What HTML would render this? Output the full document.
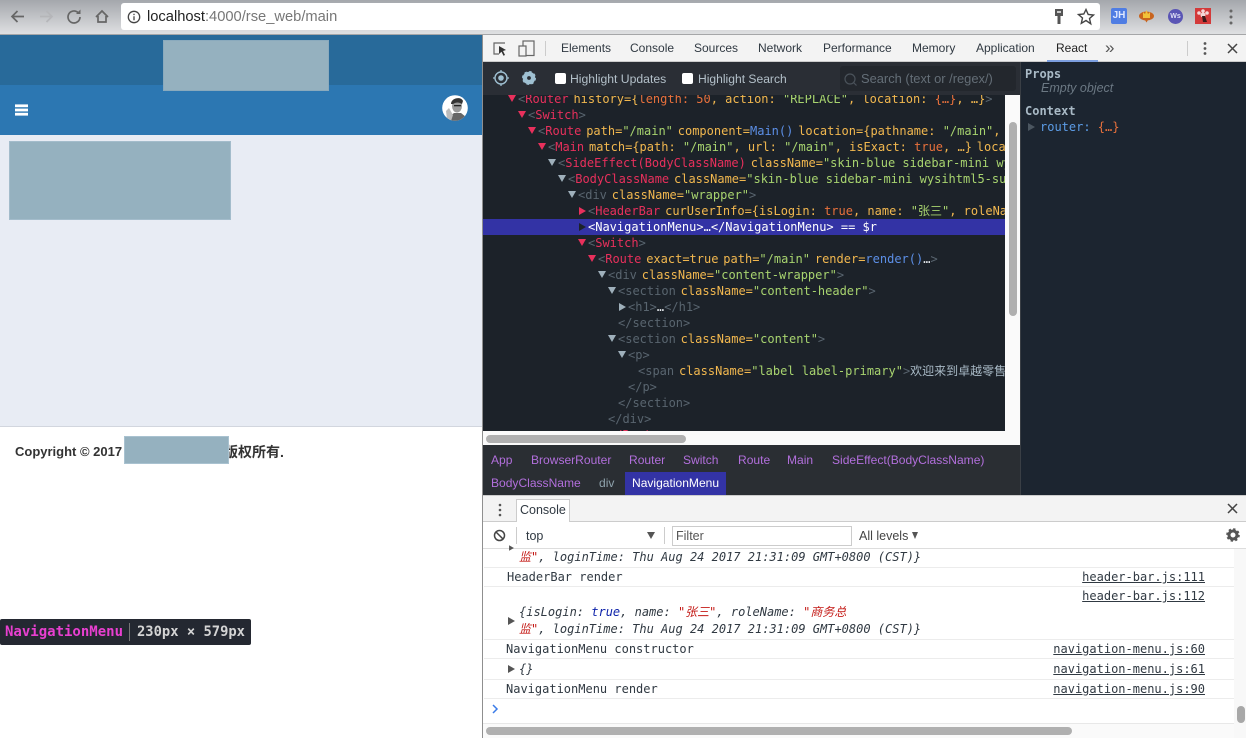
<!DOCTYPE html>
<html><head><meta charset="utf-8"><style>
html,body{margin:0;padding:0;width:1246px;height:738px;overflow:hidden;background:#fff}
*{box-sizing:border-box}
.a{position:absolute}
body{font-family:"Liberation Sans","Noto Sans CJK SC",sans-serif;position:relative}
.t{position:absolute;white-space:pre;font-size:12px;color:#303942;line-height:16px}
.m{font-family:"DejaVu Sans Mono","Noto Sans CJK SC",monospace;font-size:12px;line-height:16px;white-space:pre;position:absolute}
#tree .m{left:0;color:#5f6b75}
.g{color:#59656f}.r{color:#e8305c}.y{color:#f2b84f}.s{color:#a8d46f}.o{color:#e9713c}.b{color:#5c8fe6}.w{color:#e4e8ec}.c{color:#a9bac6}
.k{margin-left:-2.4px}
.ar{position:absolute;width:0;height:0;border-left:4px solid transparent;border-right:4px solid transparent;border-top:7px solid #e8305c}
.ag{border-top-color:#9fb0bb}
.ad{position:absolute;width:0;height:0;border-top:4px solid transparent;border-bottom:4px solid transparent;border-left:7px solid #e8305c}
.bc{position:absolute;font-size:12.05px;color:#b26fdc;line-height:16px;white-space:pre}
.sep{position:absolute;left:484px;width:750px;height:1px;background:#ececec}
.l{color:#303942;text-decoration:underline;text-align:right;right:41px}
.i{font-style:italic;color:#303942}
.red{color:#c41a16}.blu{color:#0d22aa}
</style></head><body>
<!-- chrome toolbar -->
<div class="a" style="left:0;top:0;width:1246px;height:35px;background:linear-gradient(#a4a7ac,#dfe0e2);border-bottom:1px solid #a5a6a8"></div>
<div class="a" style="left:121px;top:3px;width:979px;height:27px;background:#fff;border-radius:3px"></div>
<svg class="a" style="left:0;top:0" width="122" height="34" fill="none" stroke-width="1.7">
<path d="M24 16.5H12M17.5 11l-5.5 5.500 5.500 5.500" stroke="#666"/>
<path d="M40 16.500H52M46.500 11l5.500 5.500-5.500 5.500" stroke="#b5b6b9"/>
<path d="M80 17a6 6 0 1 1-2-4.500" stroke="#666"/><path d="M80.500 9.500v4.500h-4.500z" fill="#666"/>
<path d="M96 17l6-6 6 6M98 16v6h8v-6" stroke="#666"/>
</svg>
<svg class="a" style="left:127px;top:10px" width="14" height="14" fill="none"><circle cx="7" cy="7" r="5.700" stroke="#444" stroke-width="1.300"/><path d="M7 6.200v4M7 3.800v1.300" stroke="#444" stroke-width="1.300"/></svg>
<div class="t" style="left:147px;top:8px;font-size:14.7px;line-height:18px;color:#777"><span style="color:#222">localhost</span>:4000/rse_web/main</div>
<svg class="a" style="left:1050px;top:6px" width="20" height="20"><path d="M5 3h8v7h-2.500v8h-3v-8H5z" fill="#555"/><rect x="7" y="5" width="4" height="2" fill="#ccc"/></svg>
<svg class="a" style="left:1076px;top:7px" width="20" height="20" fill="none"><path d="M10 2.500l2.200 5 5.300.5-4 3.500 1.200 5.300L10 13.500l-4.700 2.800 1.200-5.300-4-3.500 5.300-.5z" stroke="#444" stroke-width="1.400"/></svg>
<div class="a" style="left:1111px;top:8px;width:16px;height:16px;background:#4f7de3;border-radius:2px;color:#dfe8ff;font:bold 10px/16px 'Liberation Sans';text-align:center">JH</div>
<svg class="a" style="left:1138px;top:6px" width="18" height="18"><ellipse cx="8.500" cy="10" rx="7.500" ry="4.500" fill="#c8641e"/><path d="M5 6l2 2 1.500-4 1.500 4 2-2v6H5z" fill="#f2c23a"/><path d="M7 14h3l-1.500 2.500z" fill="#c8641e"/></svg>
<div class="a" style="left:1168px;top:9px;width:15px;height:15px;border-radius:50%;background:#5a55b5;color:#e0e0f5;font:bold 7px/15px 'Liberation Sans';text-align:center">Ws</div>
<svg class="a" style="left:1195px;top:8px" width="16" height="16"><rect width="16" height="16" fill="#d33a3a"/><g fill="#f5d6d6"><circle cx="4" cy="5" r="1.800"/><circle cx="8" cy="3" r="1.800"/><circle cx="12" cy="5" r="1.800"/><circle cx="8" cy="7" r="2.500"/></g><path d="M7 8h3l2 6H8z" fill="#3a1a1a"/></svg>
<svg class="a" style="left:1228px;top:8px" width="6" height="18" fill="#666"><circle cx="3" cy="3" r="1.500"/><circle cx="3" cy="9" r="1.500"/><circle cx="3" cy="15" r="1.500"/></svg>

<!-- left page -->
<div class="a" style="left:0;top:35px;width:483px;height:50px;background:#286a9a"></div>
<div class="a" style="left:0;top:85px;width:483px;height:50px;background:#2c77b2"></div>
<div class="a" style="left:163px;top:40px;width:166px;height:51px;background:#95b1bf;border:1px solid #8aaabd"></div>
<svg class="a" style="left:15px;top:104px" width="13" height="12" fill="#fff"><rect width="13" height="2.800" y="0.400"/><rect width="13" height="2.800" y="4.600"/><rect width="13" height="2.800" y="8.800"/></svg>
<svg class="a" style="left:442px;top:95px" width="26" height="26"><circle cx="13" cy="13" r="12.800" fill="#fff"/><clipPath id="cp"><circle cx="13" cy="13" r="12.800"/></clipPath><g clip-path="url(#cp)"><path d="M8 26v-5l4-3h7l5 4v4z" fill="#666"/><ellipse cx="15" cy="11" rx="5" ry="6.500" fill="#999"/><path d="M9 9c0-6 10-8 12-3l-1 3c-3-2-6-2-9 0z" fill="#333"/><path d="M4 16l3-3 4 7-2 6-4-2z" fill="#bbb"/><rect x="12" y="10" width="7" height="1.300" fill="#222"/></g></svg>
<div class="a" style="left:0;top:135px;width:483px;height:292px;background:#e8ecf4;border-bottom:1px solid #d2d6de"></div>
<div class="a" style="left:9px;top:141px;width:222px;height:79px;background:#95b1bf;border:1px solid #a3bccb"></div>
<div class="t" style="left:15px;top:443px;font-size:13px;line-height:18px;font-weight:bold;color:#333">Copyright © 2017</div>
<div class="t" style="left:224px;top:442px;font-size:14px;line-height:20px;font-weight:bold;color:#333">版权所有.</div>
<div class="a" style="left:124px;top:436px;width:105px;height:28px;background:#95b1bf;border:1px solid #a9c2d0"></div>
<div class="a" style="left:0;top:619px;width:251px;height:26px;background:#242831;border-radius:2px"></div>
<div class="m" style="left:5px;top:624px;font-size:14px;font-weight:bold;color:#e83fd0">NavigationMenu</div>
<div class="a" style="left:129px;top:623px;width:1px;height:18px;background:#777"></div>
<div class="m" style="left:137px;top:624px;font-size:13.800px;font-weight:bold;color:#d4d4d4">230px × 579px</div>

<!-- devtools tabs -->
<div class="a" style="left:482px;top:35px;width:1px;height:703px;background:#8f8f8f"></div>
<div class="a" style="left:483px;top:35px;width:763px;height:27px;background:#f3f3f3;border-bottom:1px solid #ccc"></div>
<svg class="a" style="left:490px;top:40px" width="50" height="18" fill="none" stroke="#666" stroke-width="1.200"><path d="M15 3H4v11h5"/><path d="M9 6l7 4-3 1 2 4-1.500.7-2-4L9 14z" fill="#333" stroke="none"/><rect x="33" y="1" width="11" height="14.500"/><rect x="29" y="6" width="7" height="10" fill="#f3f3f3"/></svg>
<div class="a" style="left:545px;top:41px;width:1px;height:15px;background:#ccc"></div>
<div class="t" style="left:561px;top:40px">Elements</div>
<div class="t" style="left:630px;top:40px">Console</div>
<div class="t" style="left:694px;top:40px">Sources</div>
<div class="t" style="left:758px;top:40px">Network</div>
<div class="t" style="left:823px;top:40px">Performance</div>
<div class="t" style="left:912px;top:40px">Memory</div>
<div class="t" style="left:976px;top:40px">Application</div>
<div class="t" style="left:1056px;top:40px;color:#222">React</div>
<div class="a" style="left:1047px;top:60px;width:51px;height:2px;background:#7c9fe0"></div>
<div class="t" style="left:1105px;top:40px;font-size:17px;color:#555">»</div>
<div class="a" style="left:1187px;top:41px;width:1px;height:15px;background:#ccc"></div>
<svg class="a" style="left:1202px;top:41px" width="6" height="16" fill="#555"><circle cx="3" cy="2.500" r="1.400"/><circle cx="3" cy="7.500" r="1.400"/><circle cx="3" cy="12.500" r="1.400"/></svg>
<svg class="a" style="left:1226px;top:42px" width="13" height="13" stroke="#444" stroke-width="1.500"><path d="M2 2l9 9M11 2l-9 9"/></svg>

<!-- react toolbar -->
<div class="a" style="left:483px;top:62px;width:537px;height:33px;background:#2a2e35"></div>
<svg class="a" style="left:492px;top:69px" width="46" height="19" fill="none"><circle cx="9" cy="9" r="6" stroke="#9fc0d2" stroke-width="1.400"/><circle cx="9" cy="9" r="2.800" fill="#9fc0d2"/><path d="M9 1v2M9 15v2M1 9h2M15 9h2" stroke="#9fc0d2" stroke-width="1.300"/><circle cx="37" cy="9" r="6.300" fill="#9fc0d2" stroke="#9fc0d2" stroke-width="1.400" stroke-dasharray="2.500 2.450"/><circle cx="37" cy="9" r="5.600" fill="#9fc0d2"/><circle cx="37" cy="9" r="1.900" fill="#2a2e35"/></svg>
<div class="a" style="left:555px;top:73px;width:11px;height:11px;background:#fff;border-radius:2px"></div>
<div class="t" style="left:570px;top:71px;color:#b3c0c9;font-size:12.200px">Highlight Updates</div>
<div class="a" style="left:682px;top:73px;width:11px;height:11px;background:#fff;border-radius:2px"></div>
<div class="t" style="left:698px;top:71px;color:#b3c0c9;font-size:12.100px">Highlight Search</div>
<div class="a" style="left:840px;top:66px;width:176px;height:25px;background:#23272d;border-radius:3px"></div>
<svg class="a" style="left:843px;top:72px" width="15" height="15" fill="none" stroke="#4a525a" stroke-width="1.200"><circle cx="7" cy="7" r="5"/><path d="M10.500 10.500l3 3"/></svg>
<div class="t" style="left:861px;top:71px;color:#646e77;font-size:12.900px">Search (text or /regex/)</div>

<!-- tree -->
<div id="tree" class="a" style="left:483px;top:95px;width:522px;height:336px;background:#1c2229;overflow:hidden">
<div class="a" style="left:0;top:124px;width:522px;height:16px;background:#3333a5"></div>
<div class="m" style="left:35px;top:-4px"><span class="g">&lt;</span><span class="r">Router</span> <span class="y k">history={</span><span class="o">length: 50</span><span class="y">, action: </span><span class="s">"REPLACE"</span><span class="y">, location: </span><span class="o">{…}</span><span class="y">, …}</span><span class="g">&gt;</span></div>
<div class="m" style="left:45px;top:12px"><span class="g">&lt;</span><span class="r">Switch</span><span class="g">&gt;</span></div>
<div class="m" style="left:55px;top:28px"><span class="g">&lt;</span><span class="r">Route</span> <span class="y k">path=</span><span class="s">"/main"</span> <span class="y k">component=</span><span class="b">Main()</span> <span class="y k">location={pathname: </span><span class="s">"/main"</span><span class="y">,</span></div>
<div class="m" style="left:65px;top:44px"><span class="g">&lt;</span><span class="r">Main</span> <span class="y k">match={path: </span><span class="s">"/main"</span><span class="y">, url: </span><span class="s">"/main"</span><span class="y">, isExact: </span><span class="o">true</span><span class="y">, …}</span> <span class="y k">loca</span></div>
<div class="m" style="left:75px;top:60px"><span class="g">&lt;</span><span class="r">SideEffect(BodyClassName)</span> <span class="y k">className=</span><span class="s">"skin-blue sidebar-mini wy</span></div>
<div class="m" style="left:85px;top:76px"><span class="g">&lt;</span><span class="r">BodyClassName</span> <span class="y k">className=</span><span class="s">"skin-blue sidebar-mini wysihtml5-su</span></div>
<div class="m" style="left:95px;top:92px"><span class="g">&lt;div</span> <span class="y k">className=</span><span class="s">"wrapper"</span><span class="g">&gt;</span></div>
<div class="m" style="left:105px;top:108px"><span class="g">&lt;</span><span class="r">HeaderBar</span> <span class="y k">curUserInfo={isLogin: </span><span class="o">true</span><span class="y">, name: </span><span class="s">"张三"</span><span class="y">, roleNa</span></div>
<div class="m" style="left:105px;top:124px;color:#fff">&lt;NavigationMenu&gt;…&lt;/NavigationMenu&gt; == $r</div>
<div class="m" style="left:105px;top:140px"><span class="g">&lt;</span><span class="r">Switch</span><span class="g">&gt;</span></div>
<div class="m" style="left:115px;top:156px"><span class="g">&lt;</span><span class="r">Route</span> <span class="y k">exact=true</span> <span class="y k">path=</span><span class="s">"/main"</span> <span class="y k">render=</span><span class="b">render()</span><span class="w">…</span><span class="g">&gt;</span></div>
<div class="m" style="left:125px;top:172px"><span class="g">&lt;div</span> <span class="y k">className=</span><span class="s">"content-wrapper"</span><span class="g">&gt;</span></div>
<div class="m" style="left:135px;top:188px"><span class="g">&lt;section</span> <span class="y k">className=</span><span class="s">"content-header"</span><span class="g">&gt;</span></div>
<div class="m" style="left:145px;top:204px"><span class="g">&lt;h1&gt;</span><span class="w">…</span><span class="g">&lt;/h1&gt;</span></div>
<div class="m" style="left:135px;top:220px"><span class="g">&lt;/section&gt;</span></div>
<div class="m" style="left:135px;top:236px"><span class="g">&lt;section</span> <span class="y k">className=</span><span class="s">"content"</span><span class="g">&gt;</span></div>
<div class="m" style="left:145px;top:252px"><span class="g">&lt;p&gt;</span></div>
<div class="m" style="left:155px;top:268px"><span class="g">&lt;span</span> <span class="y k">className=</span><span class="s">"label label-primary"</span><span class="g">&gt;</span><span class="c">欢迎来到卓越零售</span></div>
<div class="m" style="left:145px;top:284px"><span class="g">&lt;/p&gt;</span></div>
<div class="m" style="left:135px;top:300px"><span class="g">&lt;/section&gt;</span></div>
<div class="m" style="left:125px;top:316px"><span class="g">&lt;/div&gt;</span></div>
<div class="m" style="left:125px;top:332px"><span class="g">&lt;</span><span class="r">/Route</span></div>
<div class="ar" style="left:25px;top:0"></div>
<div class="ar" style="left:35px;top:16px"></div>
<div class="ar" style="left:45px;top:32px"></div>
<div class="ar" style="left:55px;top:48px"></div>
<div class="ar ag" style="left:65px;top:64px"></div>
<div class="ar ag" style="left:75px;top:80px"></div>
<div class="ar ag" style="left:85px;top:96px"></div>
<div class="ad" style="left:96px;top:112px"></div>
<div class="ad" style="left:96px;top:128px;border-left-color:#1c2229"></div>
<div class="ar" style="left:95px;top:144px"></div>
<div class="ar" style="left:105px;top:160px"></div>
<div class="ar ag" style="left:115px;top:176px"></div>
<div class="ar ag" style="left:125px;top:192px"></div>
<div class="ad" style="left:136px;top:208px;border-left-color:#9fb0bb"></div>
<div class="ar ag" style="left:125px;top:240px"></div>
<div class="ar ag" style="left:135px;top:256px"></div>
</div>
<!-- tree scrollbars -->
<div class="a" style="left:1005px;top:95px;width:15px;height:336px;background:#fafafa"></div>
<div class="a" style="left:1009px;top:122px;width:8px;height:194px;background:#b0b0b0;border-radius:4px"></div>
<div class="a" style="left:483px;top:431px;width:537px;height:14px;background:#fafafa"></div>
<div class="a" style="left:486px;top:435px;width:200px;height:8px;background:#b0b0b0;border-radius:4px"></div>

<!-- breadcrumbs -->
<div class="a" style="left:483px;top:445px;width:537px;height:50px;background:#2a2e33"></div>
<div class="a" style="left:625px;top:472px;width:101px;height:23px;background:#3333a5"></div>
<div class="bc" style="left:491px;top:452px">App</div>
<div class="bc" style="left:531px;top:452px">BrowserRouter</div>
<div class="bc" style="left:629px;top:452px">Router</div>
<div class="bc" style="left:683px;top:452px">Switch</div>
<div class="bc" style="left:738px;top:452px">Route</div>
<div class="bc" style="left:787px;top:452px">Main</div>
<div class="bc" style="left:832px;top:452px">SideEffect(BodyClassName)</div>
<div class="bc" style="left:491px;top:475px">BodyClassName</div>
<div class="bc" style="left:599px;top:475px;color:#8fa3ad">div</div>
<div class="bc" style="left:632px;top:475px;color:#fff">NavigationMenu</div>

<!-- right panel -->
<div class="a" style="left:1020px;top:62px;width:226px;height:433px;background:#1c2530;border-left:1px solid #3a3f45"></div>
<div class="m" style="left:1025px;top:66px;font-weight:bold;color:#a9bac6">Props</div>
<div class="t" style="left:1041px;top:80px;font-style:italic;color:#6b7883;font-size:12.500px">Empty object</div>
<div class="m" style="left:1025px;top:103px;font-weight:bold;color:#a9bac6">Context</div>
<div class="ad" style="left:1028px;top:123px;border-left-color:#4b5660"></div>
<div class="m" style="left:1040px;top:119px;color:#5c9ce6">router: <span class="o">{…}</span></div>

<!-- console drawer -->
<div class="a" style="left:483px;top:495px;width:763px;height:27px;background:#f3f3f3;border-top:1px solid #ccc;border-bottom:1px solid #ccc"></div>
<svg class="a" style="left:497px;top:503px" width="6" height="14" fill="#555"><circle cx="3" cy="2" r="1.300"/><circle cx="3" cy="7" r="1.300"/><circle cx="3" cy="12" r="1.300"/></svg>
<div class="a" style="left:516px;top:499px;width:54px;height:24px;background:#fff;border:1px solid #ccc;border-bottom:none"></div>
<div class="t" style="left:520px;top:502px;font-size:12.500px">Console</div>
<svg class="a" style="left:1226px;top:502px" width="13" height="13" stroke="#444" stroke-width="1.500"><path d="M2 2l9 9M11 2l-9 9"/></svg>
<div class="a" style="left:483px;top:522px;width:763px;height:27px;background:#fff;border-bottom:1px solid #ddd"></div>
<svg class="a" style="left:492px;top:528px" width="15" height="15" fill="none" stroke="#444" stroke-width="1.500"><circle cx="7.500" cy="7.500" r="5"/><path d="M4 4l7 7"/></svg>
<div class="a" style="left:516px;top:527px;width:1px;height:17px;background:#ccc"></div>
<div class="t" style="left:526px;top:528px;font-size:12.500px">top</div>
<div class="a" style="left:647px;top:532px;border-left:4px solid transparent;border-right:4px solid transparent;border-top:7px solid #555;width:0;height:0"></div>
<div class="a" style="left:664px;top:527px;width:1px;height:17px;background:#ccc"></div>
<div class="a" style="left:672px;top:526px;width:180px;height:20px;border:1px solid #ccc;background:#fff"></div>
<div class="t" style="left:676px;top:528px;font-size:12.500px;color:#555">Filter</div>
<div class="t" style="left:859px;top:528px;font-size:12.500px;color:#444">All levels</div>
<div class="a" style="left:912px;top:532px;border-left:3.500px solid transparent;border-right:3.500px solid transparent;border-top:7px solid #555;width:0;height:0"></div>
<svg class="a" style="left:1225px;top:527px" width="16" height="16" fill="none"><circle cx="8" cy="8" r="4" stroke="#555" stroke-width="3"/><circle cx="8" cy="8" r="5.800" stroke="#555" stroke-width="2" stroke-dasharray="2.300 2.250"/></svg>

<!-- console list -->
<div class="a" style="left:1234px;top:549px;width:12px;height:189px;background:#f8f8f8"></div>
<div class="a" style="left:1237px;top:706px;width:8px;height:17px;background:#a8a8a8;border-radius:4px"></div>
<div class="ad" style="left:508px;top:544px;border-left-color:#555;transform:scale(.7)"></div>
<div class="m i" style="left:519px;top:549px"><span class="red">监"</span>, loginTime: Thu Aug 24 2017 21:31:09 GMT+0800 (CST)}</div>
<div class="sep" style="top:567px"></div>
<div class="m" style="left:507px;top:569px;color:#303942">HeaderBar render</div>
<div class="m l" style="top:569px">header-bar.js:111</div>
<div class="sep" style="top:586px"></div>
<div class="m l" style="top:588px">header-bar.js:112</div>
<div class="m i" style="left:519px;top:604px">{isLogin: <span class="blu">true</span>, name: <span class="red">"张三"</span>, roleName: <span class="red">"商务总</span></div>
<div class="ad" style="left:508px;top:617px;border-left-color:#555"></div>
<div class="m i" style="left:519px;top:621px"><span class="red">监"</span>, loginTime: Thu Aug 24 2017 21:31:09 GMT+0800 (CST)}</div>
<div class="sep" style="top:639px"></div>
<div class="m" style="left:506px;top:641px;color:#303942">NavigationMenu constructor</div>
<div class="m l" style="top:641px">navigation-menu.js:60</div>
<div class="sep" style="top:658px"></div>
<div class="ad" style="left:508px;top:665px;border-left-color:#555"></div>
<div class="m i" style="left:519px;top:661px">{}</div>
<div class="m l" style="top:661px">navigation-menu.js:61</div>
<div class="sep" style="top:679px"></div>
<div class="m" style="left:506px;top:681px;color:#303942">NavigationMenu render</div>
<div class="m l" style="top:681px">navigation-menu.js:90</div>
<div class="sep" style="top:698px"></div>
<svg class="a" style="left:491px;top:704px" width="8" height="10" fill="none" stroke="#3a7be8" stroke-width="1.500"><path d="M2 1l4 4-4 4"/></svg>
<div class="a" style="left:483px;top:723px;width:751px;height:15px;background:#fafafa;border-top:1px solid #e8e8e8"></div>
<div class="a" style="left:486px;top:727px;width:586px;height:8px;background:#b0b0b0;border-radius:4px"></div>
</body></html>
